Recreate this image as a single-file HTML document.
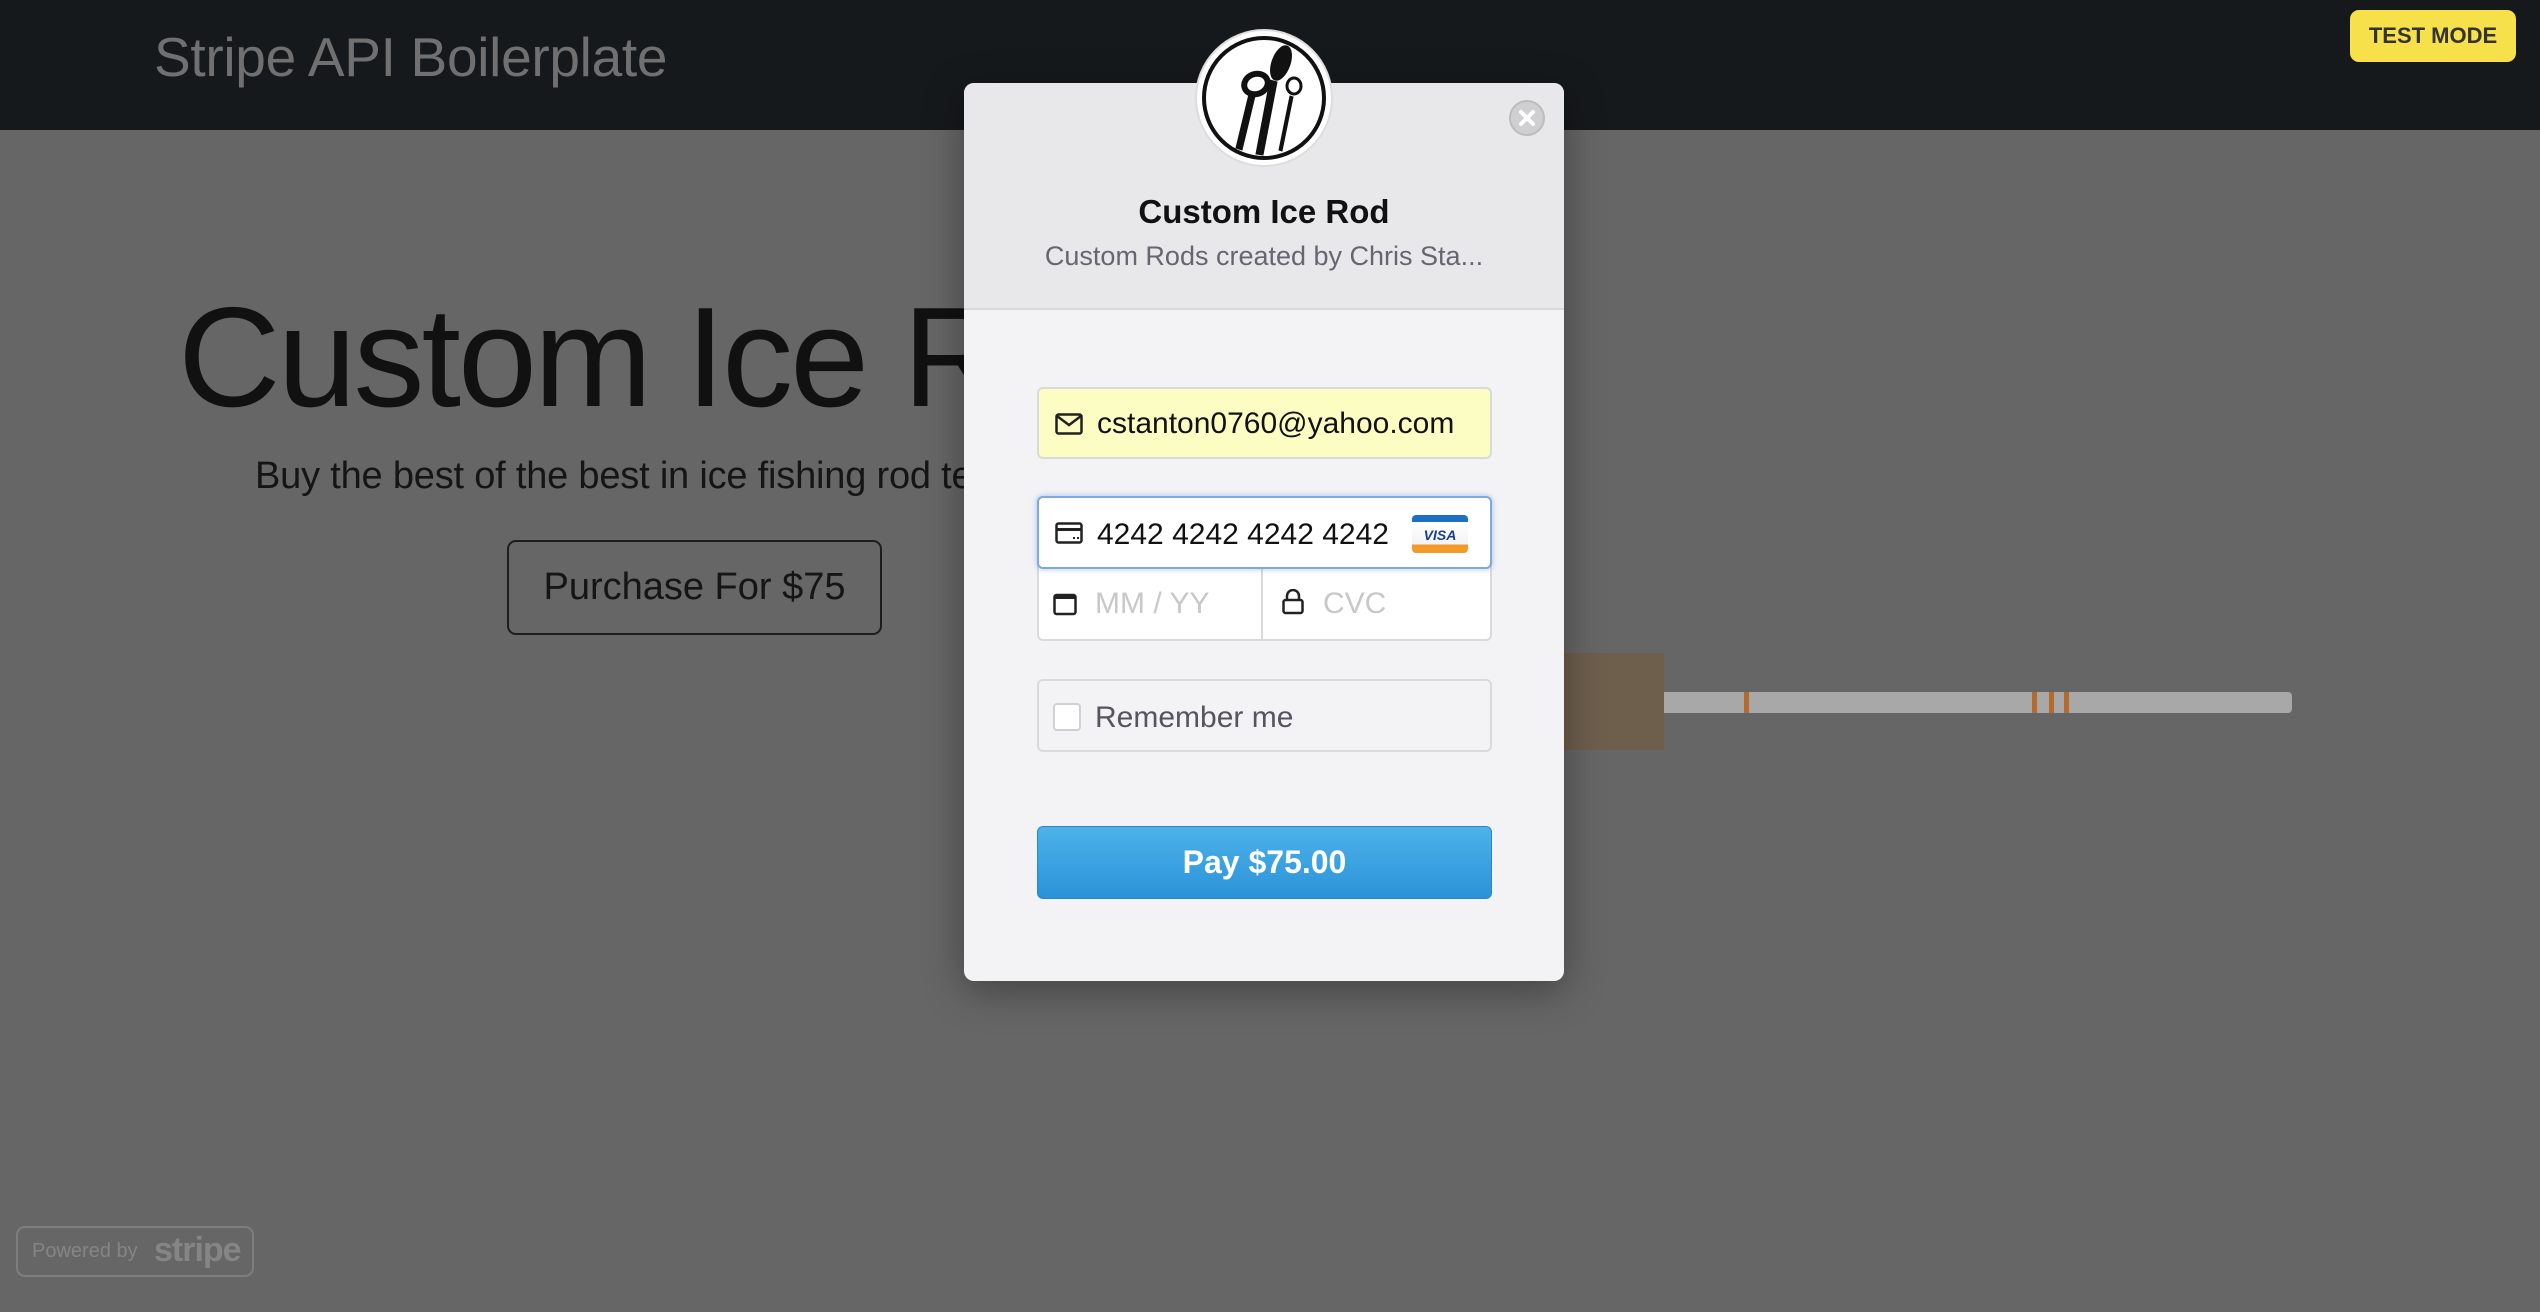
<!DOCTYPE html>
<html><head><meta charset="utf-8"><style>
*{margin:0;padding:0;box-sizing:border-box}
body{width:2540px;height:1312px;overflow:hidden;background:#666;font-family:"Liberation Sans",sans-serif;position:relative}
.hdr{position:absolute;left:0;top:0;width:2540px;height:130px;background:#16191c}
.hdr .t{position:absolute;left:154px;top:25px;font-size:55px;color:#707070;letter-spacing:-0.3px}
.badge{position:absolute;left:2350px;top:10px;width:166px;height:52px;background:#f7e14a;border-radius:9px;color:#333;font-weight:bold;font-size:22px;text-align:center;line-height:52px}
.h1{position:absolute;left:178px;top:276px;font-size:142px;color:#111;letter-spacing:-3px;white-space:nowrap}
.sub{position:absolute;left:255px;top:455px;font-size:38px;color:#151515;letter-spacing:-0.2px;white-space:nowrap}
.btn{position:absolute;left:507px;top:540px;width:375px;height:95px;border:2px solid #1d1d1d;border-radius:9px;font-size:38px;color:#151515;text-align:center;line-height:91px;letter-spacing:0}
.cork{position:absolute;left:1563px;top:653px;width:101px;height:97px;background:#6e5e4c}
.rod{position:absolute;left:1664px;top:692px;width:628px;height:21px;background:#a8a8a8;border-radius:0 4px 4px 0}
.modal{position:absolute;left:964px;top:83px;width:600px;height:898px;background:#f3f3f5;border-radius:10px;box-shadow:0 10px 40px rgba(0,0,0,.35);overflow:visible}
.mh{position:absolute;left:0;top:0;width:600px;height:227px;background:#e8e8ea;border-radius:10px 10px 0 0;border-bottom:2px solid #d8d8da}
.logo{position:absolute;left:230px;top:-55px;width:140px;height:140px}
.close{position:absolute;left:545px;top:17px;width:36px;height:36px;border-radius:50%;background:#cfcfd1;border:2px solid #bcbcbe}
.mt{position:absolute;left:0;width:600px;text-align:center}
.field{position:absolute;left:73px;width:455px;border:2px solid #dadadc;border-radius:6px;background:#fff}
.ft{position:absolute;left:58px;font-size:30px;color:#111}
.pay{position:absolute;left:73px;top:743px;width:455px;height:73px;border-radius:6px;background:linear-gradient(#4db3ea,#2b92d8);border:1px solid #2a86c6;color:#fff;font-weight:bold;font-size:32px;text-align:center;line-height:71px}
.pw{position:absolute;left:16px;top:1226px;width:238px;height:51px;border:2px solid #7e7e7e;border-radius:9px;color:#858585}
</style></head><body>
<div class="hdr"><div class="t">Stripe API Boilerplate</div><div class="badge">TEST MODE</div></div>
<div class="h1">Custom Ice Rod</div>
<div class="sub">Buy the best of the best in ice fishing rod technology</div>
<div class="btn">Purchase For $75</div>
<div class="cork"></div>
<div class="rod"><div style="position:absolute;left:80px;top:0;width:5px;height:21px;background:#b46a2a"></div><div style="position:absolute;left:368px;top:0;width:5px;height:21px;background:#b46a2a"></div><div style="position:absolute;left:385px;top:0;width:5px;height:21px;background:#b46a2a"></div><div style="position:absolute;left:400px;top:0;width:5px;height:21px;background:#b46a2a"></div></div>
<div class="pw"><span style="position:absolute;left:14px;top:12px;font-size:20px">Powered by</span><span style="position:absolute;left:136px;top:3px;font-size:34px;font-weight:bold;letter-spacing:-1px">stripe</span></div>

<div class="modal">
 <div class="mh">
  <svg class="logo" viewBox="0 0 140 140">
   <circle cx="70" cy="70" r="68" fill="#fff" stroke="#ddd" stroke-width="2"/>
   <circle cx="70" cy="70" r="60" fill="#fff" stroke="#111" stroke-width="4"/>
   <g fill="#111" stroke="#111">
    <path d="M42 120 L55 66 L61 68 L48 122Z"/>
    <ellipse cx="62" cy="56" rx="12" ry="10" fill="#fff" stroke-width="6" transform="rotate(-20 62 56)"/>
    <path d="M62 126 L76 52 L83 54 L69 127Z"/>
    <ellipse cx="87" cy="35" rx="9" ry="18" transform="rotate(20 87 35)"/>
    <path d="M85 122 L96 68 L99 69 L88 123Z"/>
    <ellipse cx="100" cy="58" rx="7" ry="8" fill="#fff" stroke-width="3"/>
   </g>
  </svg>
  <div class="close"><svg width="32" height="32" viewBox="0 0 32 32"><path d="M10 10L22 22M22 10L10 22" stroke="#fff" stroke-width="4" stroke-linecap="round"/></svg></div>
  <div class="mt" style="top:110px;font-size:33px;font-weight:bold;color:#111">Custom Ice Rod</div>
  <div class="mt" style="top:158px;font-size:27px;color:#666670">Custom Rods created by Chris Sta...</div>
 </div>
 <div class="field" style="top:304px;height:72px;background:#fbfdc2"><svg style="position:absolute;left:16px;top:24px" width="28" height="22" viewBox="0 0 28 22"><rect x="1.5" y="1.5" width="25" height="19" rx="2" fill="none" stroke="#222" stroke-width="2.5"/><path d="M2 3L14 12L26 3" fill="none" stroke="#222" stroke-width="2.5"/></svg><div class="ft" style="top:18px">cstanton0760@yahoo.com</div></div>
 <div class="field" style="top:413px;height:145px;border-color:#dadadc"></div>
 <div style="position:absolute;left:297px;top:486px;width:2px;height:70px;background:#dadadc"></div>
 <div class="field" style="top:413px;height:73px;border-color:#7fa9e0;box-shadow:0 0 6px rgba(80,140,230,.5)"><svg style="position:absolute;left:16px;top:24px" width="28" height="22" viewBox="0 0 28 22"><rect x="1.5" y="1.5" width="25" height="19" rx="2" fill="none" stroke="#222" stroke-width="2.5"/><rect x="2" y="6" width="24" height="3" fill="#222"/><rect x="18" y="15" width="2" height="2" fill="#222"/><rect x="22" y="15" width="2" height="2" fill="#222"/></svg><div class="ft" style="top:20px">4242 4242 4242 4242</div>
  <div style="position:absolute;left:373px;top:17px;width:56px;height:38px;border-radius:4px;background:linear-gradient(#1d6fc4 0,#1d6fc4 18%,#fff 18%,#f3f3f3 78%,#f29a2a 78%);text-align:center;font:bold italic 14px 'Liberation Sans',sans-serif;color:#1a3f8f;line-height:40px">VISA</div></div>
 <svg style="position:absolute;left:89px;top:509px" width="24" height="24" viewBox="0 0 24 24"><rect x="1.5" y="3" width="21" height="19" rx="2" fill="none" stroke="#222" stroke-width="2.5"/><rect x="2" y="3" width="20" height="4" fill="#222"/></svg>
 <div style="position:absolute;left:131px;top:504px;font-size:30px;color:#c8c8c8">MM / YY</div>
 <svg style="position:absolute;left:318px;top:506px" width="22" height="26" viewBox="0 0 22 26"><rect x="1.5" y="11" width="19" height="13" rx="2" fill="none" stroke="#222" stroke-width="2.5"/><path d="M5 11V7a6 6 0 0 1 12 0v4" fill="none" stroke="#222" stroke-width="2.5"/></svg>
 <div style="position:absolute;left:359px;top:504px;font-size:30px;color:#c8c8c8">CVC</div>
 <div class="field" style="top:596px;height:73px;background:#f3f3f5"><div style="position:absolute;left:14px;top:22px;width:28px;height:28px;border:2px solid #d0d0d2;border-radius:4px;background:#fff"></div><div class="ft" style="left:56px;top:20px;color:#555560">Remember me</div></div>
 <div class="pay">Pay $75.00</div>
</div>
</body></html>
